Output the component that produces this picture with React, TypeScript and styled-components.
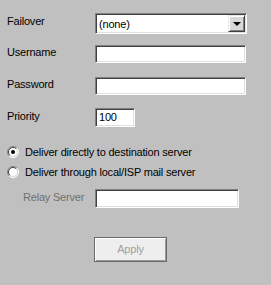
import React from "react";
import styled, { createGlobalStyle } from "styled-components";

const Global = createGlobalStyle`
  html, body { margin: 0; padding: 0; background: #c0c0c0; }
  body { font-family: "Liberation Sans", Arial, sans-serif; font-size: 11px; letter-spacing: -0.2px; color: #000; }
`;

const Panel = styled.div`
  width: 271px;
  height: 285px;
  box-sizing: border-box;
  padding: 13px 0 0 7px;
  background: #c0c0c0;
  display: flex;
  flex-direction: column;
`;

const Row = styled.div<{ $mt?: number; $indent?: number }>`
  display: flex;
  align-items: flex-start;
  margin-top: ${(p) => p.$mt ?? 0}px;
  padding-left: ${(p) => p.$indent ?? 0}px;
`;

const Label = styled.div<{ $pt?: number; $w: number; $disabled?: boolean }>`
  width: ${(p) => p.$w}px;
  flex: none;
  line-height: 13px;
  padding-top: ${(p) => p.$pt ?? 1}px;
  color: ${(p) => (p.$disabled ? "#707070" : "#000")};
  white-space: nowrap;
`;

const Sunken = styled.div<{ $w: number; $h: number }>`
  box-sizing: border-box;
  width: ${(p) => p.$w}px;
  height: ${(p) => p.$h}px;
  background: #fff;
  border-top: 1px solid #808080;
  border-left: 1px solid #808080;
  border-right: 1px solid #ffffff;
  border-bottom: 1px solid #ffffff;
  box-shadow: inset 1px 1px 0 #404040, inset -1px -1px 0 #e0e0e0;
  display: flex;
  align-items: center;
  padding-left: 3px;
  line-height: 13px;
  position: relative;
`;

const SelectText = styled.span`
  flex: 1;
  padding-top: 1px;
`;

const ArrowButton = styled.div`
  box-sizing: border-box;
  width: 17px;
  height: 17px;
  margin-right: 1px;
  background: #d8d8d8;
  border-top: 1px solid #e8e8e8;
  border-left: 1px solid #e8e8e8;
  border-right: 1px solid #404040;
  border-bottom: 1px solid #404040;
  box-shadow: inset 1px 1px 0 #ffffff, inset -1px -1px 0 #808080;
  display: flex;
  align-items: center;
  justify-content: center;
`;

const Arrow = styled.div`
  width: 0;
  height: 0;
  border-left: 4px solid transparent;
  border-right: 4px solid transparent;
  border-top: 4px solid #000;
  margin-top: 1px;
`;

const RadioRow = styled.label<{ $mt?: number }>`
  display: flex;
  align-items: center;
  height: 20px;
  margin-top: ${(p) => p.$mt ?? 0}px;
  gap: 6px;
  line-height: 13px;
`;

const ButtonRow = styled.div`
  display: flex;
  margin-top: 29px;
  padding-left: 87px;
`;

const Button = styled.button`
  box-sizing: border-box;
  width: 73px;
  height: 25px;
  padding: 0;
  background: #eeeeee;
  border: 1px solid #6a6a6a;
  box-shadow: inset 1px 1px 0 #ffffff, inset -1px -1px 0 #9a9a9a;
  font-family: "Liberation Sans", Arial, sans-serif;
  font-size: 11px;
  letter-spacing: -0.2px;
  color: #a0a0a0;
  line-height: 13px;
`;

function Radio({ checked }: { checked?: boolean }) {
  return (
    <svg width="12" height="12" viewBox="0 0 12 12" style={{ flex: "none" }}>
      <circle cx="6" cy="6" r="5" fill="#fff" />
      <path d="M2.1 9.9 A5.5 5.5 0 0 1 9.9 2.1" fill="none" stroke="#808080" strokeWidth="1" />
      <path d="M9.9 2.1 A5.5 5.5 0 0 1 2.1 9.9" fill="none" stroke="#ffffff" strokeWidth="1" />
      <path d="M2.8 9.2 A4.5 4.5 0 0 1 9.2 2.8" fill="none" stroke="#404040" strokeWidth="1" />
      <path d="M9.2 2.8 A4.5 4.5 0 0 1 2.8 9.2" fill="none" stroke="#d8d8d8" strokeWidth="1" />
      {checked && <circle cx="6" cy="6" r="2" fill="#000" />}
    </svg>
  );
}

export default function App() {
  return (
    <>
      <Global />
      <Panel>
        <Row>
          <Label $w={88} $pt={2}>Failover</Label>
          <Sunken $w={152} $h={21}>
            <SelectText>(none)</SelectText>
            <ArrowButton>
              <Arrow />
            </ArrowButton>
          </Sunken>
        </Row>
        <Row $mt={11}>
          <Label $w={88}>Username</Label>
          <Sunken $w={151} $h={18} />
        </Row>
        <Row $mt={14}>
          <Label $w={88}>Password</Label>
          <Sunken $w={151} $h={18} />
        </Row>
        <Row $mt={13}>
          <Label $w={88} $pt={2}>Priority</Label>
          <Sunken $w={40} $h={19}>100</Sunken>
        </Row>
        <RadioRow $mt={15}>
          <Radio checked />
          <span>Deliver directly to destination server</span>
        </RadioRow>
        <RadioRow>
          <Radio />
          <span>Deliver through local/ISP mail server</span>
        </RadioRow>
        <Row $mt={7} $indent={16}>
          <Label $w={72} $pt={2} $disabled>Relay Server</Label>
          <Sunken $w={144} $h={19} />
        </Row>
        <ButtonRow>
          <Button disabled>Apply</Button>
        </ButtonRow>
      </Panel>
    </>
  );
}
